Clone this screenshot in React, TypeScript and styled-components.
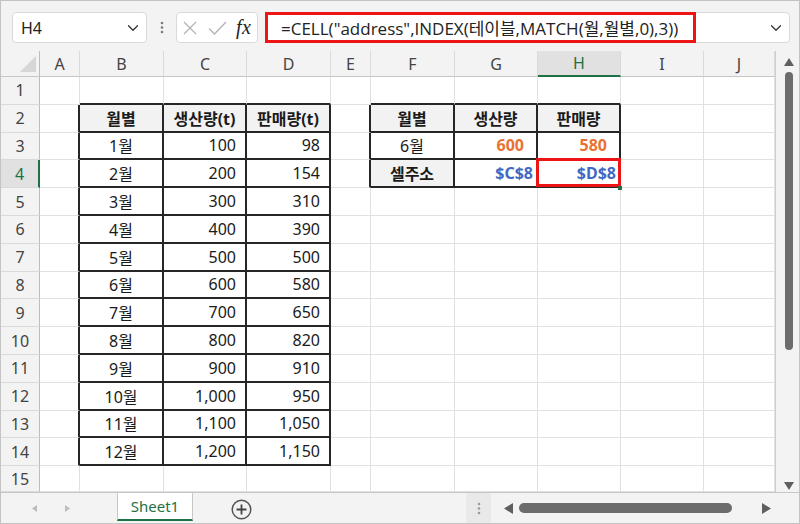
import React from 'react';
import styled, { createGlobalStyle } from 'styled-components';
import { ChevronDown } from 'lucide-react';

const GlobalStyle = createGlobalStyle`
  html, body {
    margin: 0;
    padding: 0;
    background: #fff;
  }
  body {
    font-family: "Noto Sans", "Noto Sans CJK KR", sans-serif;
  }
`;

const GREEN = '#1e7145';

const Window = styled.div`
  width: 800px;
  height: 524px;
  box-sizing: border-box;
  border: 1px solid #c4c4c4;
  background: #f3f3f3;
  display: flex;
  flex-direction: column;
  overflow: hidden;
`;

// ---- formula bar ----
const Toolbar = styled.div`
  flex: 0 0 50px;
  box-sizing: border-box;
  display: flex;
  align-items: flex-start;
  padding: 11px 9px 0 11px;
`;

const NameBox = styled.div`
  width: 135px;
  height: 31px;
  box-sizing: border-box;
  background: #fff;
  border: 1px solid #dadada;
  border-radius: 4px;
  display: flex;
  align-items: center;
  justify-content: space-between;
  padding: 0 4px 0 8px;
  font: 16px "Noto Sans", sans-serif;
  color: #222;
`;

const Kebab = styled.div`
  width: 29px;
  height: 31px;
  display: flex;
  align-items: center;
  justify-content: center;
`;

const IconBox = styled.div`
  width: 82px;
  height: 31px;
  box-sizing: border-box;
  background: #fff;
  border: 1px solid #dadada;
  border-radius: 4px;
  display: flex;
  align-items: center;
  padding-left: 6px;
  gap: 11px;
`;

const Fx = styled.span`
  font: italic 20px "Liberation Serif", serif;
  color: #222;
  margin-left: -2px;
  letter-spacing: 0.5px;
`;

const FormulaBox = styled.div`
  flex: 1;
  margin-left: 7px;
  height: 31px;
  box-sizing: border-box;
  background: #fff;
  border: 1px solid #dadada;
  border-radius: 4px;
  display: flex;
  align-items: center;
  justify-content: space-between;
  padding-right: 4px;
`;

const Highlight = styled.div`
  width: 431px;
  align-self: stretch;
  box-sizing: border-box;
  margin: -1px 0 -1px -1px;
  border: 3px solid #ec1414;
  display: flex;
  align-items: center;
  padding-left: 13px;
  font: 17px "Open Sans", "Noto Sans CJK KR", sans-serif;
  color: #222;
  white-space: nowrap;
`;

// ---- sheet ----
const Main = styled.div`
  flex: 1;
  display: flex;
  min-height: 0;
`;

const Sheet = styled.div`
  flex: 1;
  display: grid;
  grid-template-columns: 39px 40px 84px 83px 84px 40px 84px 83px 83px 83px 1fr;
  grid-template-rows: 26px repeat(14, 27.8px) 1fr;
  background: #fff;
  overflow: hidden;
`;

const Corner = styled.div`
  background: #f3f3f3;
  border-right: 1px solid #bdbdbd;
  border-bottom: 1px solid #c6c6c6;
  display: flex;
  align-items: flex-end;
  justify-content: flex-end;
  padding: 0 3px 4px 0;
`;

const ColHead = styled.div<{ $active?: boolean }>`
  box-sizing: border-box;
  display: flex;
  align-items: center;
  justify-content: center;
  background: ${p => (p.$active ? '#e1e1e1' : '#f3f3f3')};
  color: ${p => (p.$active ? GREEN : '#444')};
  border-right: 1px solid #dadada;
  border-bottom: ${p => (p.$active ? `2px solid ${GREEN}` : '1px solid #c6c6c6')};
  font: 16px "Noto Sans", sans-serif;
`;

const RowHead = styled.div<{ $active?: boolean }>`
  box-sizing: border-box;
  display: flex;
  align-items: center;
  justify-content: center;
  background: ${p => (p.$active ? '#e1e1e1' : '#f3f3f3')};
  color: ${p => (p.$active ? GREEN : '#444')};
  border-right: ${p => (p.$active ? `2px solid ${GREEN}` : '1px solid #bdbdbd')};
  border-bottom: 1px solid #dadada;
  font: 16px "Noto Sans", sans-serif;
`;

type Align = 'left' | 'center' | 'right';
type Tone = 'ink' | 'orange' | 'blue';

const tones: Record<Tone, string> = {
  ink: '#1a1a1a',
  orange: '#ea7130',
  blue: '#4068c4',
};

const Cell = styled.div<{
  $right: boolean;
  $bottom: boolean;
  $align: Align;
  $bold?: boolean;
  $tone: Tone;
  $fill?: boolean;
  $pad: number;
}>`
  position: relative;
  box-sizing: border-box;
  display: flex;
  align-items: center;
  justify-content: ${p => (p.$align === 'center' ? 'center' : p.$align === 'right' ? 'flex-end' : 'flex-start')};
  padding: 0 ${p => (p.$align === 'right' ? p.$pad : 0)}px 0 ${p => (p.$align === 'left' ? 4 : 0)}px;
  border-right: ${p => (p.$right ? '2px solid #262626' : '1px solid #e1e1e1')};
  border-bottom: ${p => (p.$bottom ? '2px solid #262626' : '1px solid #e1e1e1')};
  background: ${p => (p.$fill ? '#f2f2f2' : '#fff')};
  font: ${p => (p.$bold ? 700 : 400)} 16px "Noto Sans", "Noto Sans CJK KR", sans-serif;
  color: ${p => tones[p.$tone]};
  white-space: nowrap;
`;

const Focus = styled.div`
  position: absolute;
  left: -2px;
  right: -2px;
  top: -2px;
  bottom: -1px;
  border: 3px solid #ec1414;
  z-index: 2;
  pointer-events: none;
`;

const FillHandle = styled.div`
  position: absolute;
  right: -3px;
  bottom: -4px;
  width: 4px;
  height: 4px;
  background: ${GREEN};
  z-index: 3;
`;

// ---- vertical scrollbar ----
const VScroll = styled.div`
  flex: 0 0 24px;
  box-sizing: border-box;
  border-left: 1px solid #cfcfcf;
  background: #f3f3f3;
  display: flex;
  flex-direction: column;
  align-items: center;
  padding: 7px 0 2px 2px;
`;

const VThumb = styled.div`
  width: 8px;
  height: 278px;
  margin-top: 6px;
  border-radius: 4px;
  background: #6c6c6c;
`;

const Spacer = styled.div`
  flex: 1;
`;

// ---- sheet tabs ----
const TabBar = styled.div`
  flex: 0 0 31px;
  box-sizing: border-box;
  display: flex;
  align-items: stretch;
  border-top: 1px solid #c6c6c6;
  background: #f3f3f3;
`;

const TabNav = styled.div`
  width: 116px;
  display: flex;
  align-items: center;
  padding-left: 31px;
  gap: 28px;
  box-sizing: border-box;
`;

const Tab = styled.div`
  width: 76px;
  box-sizing: border-box;
  background: #fff;
  border-left: 1px solid #c6c6c6;
  border-right: 1px solid #c6c6c6;
  border-bottom: 2px solid ${GREEN};
  margin-bottom: 2px;
  display: flex;
  align-items: center;
  justify-content: center;
  font: 15px "Noto Sans", sans-serif;
  color: ${GREEN};
`;

const AddArea = styled.div`
  flex: 1;
  display: flex;
  align-items: center;
  padding: 3px 0 0 38px;
`;

const SplitGrip = styled.div`
  width: 25px;
  background: #e9e9e9;
  display: flex;
  align-items: center;
  justify-content: center;
`;

const HScroll = styled.div`
  width: 285px;
  display: flex;
  align-items: center;
  padding: 0 5px 0 13px;
  box-sizing: border-box;
  gap: 6px;
`;

const HThumb = styled.div`
  width: 213px;
  height: 10px;
  border-radius: 5px;
  background: #6c6c6c;
`;

const ScrollCorner = styled.div`
  width: 23px;
`;

// ---- data ----
const cols = ['A', 'B', 'C', 'D', 'E', 'F', 'G', 'H', 'I', 'J'];
const rows = Array.from({ length: 15 }, (_, i) => i + 1);

type CellData = { text: string; align?: Align; bold?: boolean; tone?: Tone; fill?: boolean; pad?: number };

const fmt = (n: number) => n.toLocaleString('en-US');
const sales = [98, 154, 310, 390, 500, 580, 650, 820, 910, 950, 1050, 1150];

const data: Record<string, CellData> = {
  B2: { text: '월별', align: 'center', bold: true, fill: true },
  C2: { text: '생산량(t)', align: 'center', bold: true, fill: true },
  D2: { text: '판매량(t)', align: 'center', bold: true, fill: true },
  F2: { text: '월별', align: 'center', bold: true, fill: true },
  G2: { text: '생산량', align: 'center', bold: true, fill: true },
  H2: { text: '판매량', align: 'center', bold: true, fill: true },
  F3: { text: '6월', align: 'center' },
  G3: { text: '600', align: 'right', bold: true, tone: 'orange', pad: 12 },
  H3: { text: '580', align: 'right', bold: true, tone: 'orange', pad: 12 },
  F4: { text: '셀주소', align: 'center', bold: true, fill: true },
  G4: { text: '$C$8', align: 'right', bold: true, tone: 'blue', pad: 3 },
  H4: { text: '$D$8', align: 'right', bold: true, tone: 'blue', pad: 3 },
};
sales.forEach((s, i) => {
  const r = i + 3;
  data[`B${r}`] = { text: `${i + 1}월`, align: 'center' };
  data[`C${r}`] = { text: fmt((i + 1) * 100), align: 'right' };
  data[`D${r}`] = { text: fmt(s), align: 'right' };
});

const tables = [
  { c0: 1, c1: 3, r0: 2, r1: 14 },
  { c0: 5, c1: 7, r0: 2, r1: 4 },
];
const inTable = (r: number, c: number) =>
  tables.some(t => c >= t.c0 && c <= t.c1 && r >= t.r0 && r <= t.r1);

const SelectAll = () => (
  <svg width="16" height="16" viewBox="0 0 16 16">
    <polygon points="16,0 16,16 0,16" fill="#d6d6d6" />
  </svg>
);

type Dir = 'up' | 'down' | 'left' | 'right';

const Tri = ({ dir, w, h, color }: { dir: Dir; w: number; h: number; color: string }) => {
  const pts = {
    up: `0,${h} ${w / 2},0 ${w},${h}`,
    down: `0,0 ${w},0 ${w / 2},${h}`,
    left: `${w},0 0,${h / 2} ${w},${h}`,
    right: `0,0 ${w},${h / 2} 0,${h}`,
  }[dir];
  return (
    <svg width={w} height={h} viewBox={`0 0 ${w} ${h}`}>
      <polygon points={pts} fill={color} />
    </svg>
  );
};

const Dots = ({ color }: { color: string }) => (
  <svg width="4" height="13" viewBox="0 0 4 13">
    <circle cx="2" cy="2" r="1.3" fill={color} />
    <circle cx="2" cy="6.5" r="1.3" fill={color} />
    <circle cx="2" cy="11" r="1.3" fill={color} />
  </svg>
);

export default function App() {
  return (
    <>
      <GlobalStyle />
      <Window>
        <Toolbar>
          <NameBox>
            H4
            <ChevronDown size={18} strokeWidth={1.7} color="#333" />
          </NameBox>
          <Kebab>
            <Dots color="#7a7a7a" />
          </Kebab>
          <IconBox>
            <svg width="14" height="14" viewBox="0 0 14 14">
              <path d="M1 1 13 13M13 1 1 13" stroke="#b3b3b3" strokeWidth="1.3" fill="none" />
            </svg>
            <svg width="19" height="14" viewBox="0 0 19 14">
              <path d="M1 7.5 6.5 13 18 1" stroke="#b3b3b3" strokeWidth="1.3" fill="none" />
            </svg>
            <Fx>fx</Fx>
          </IconBox>
          <FormulaBox>
            <Highlight>=CELL("address",INDEX(테이블,MATCH(월,월별,0),3))</Highlight>
            <ChevronDown size={18} strokeWidth={1.7} color="#333" />
          </FormulaBox>
        </Toolbar>

        <Main>
          <Sheet>
            <Corner>
              <SelectAll />
            </Corner>
            {cols.map(c => (
              <ColHead key={c} $active={c === 'H'}>
                {c}
              </ColHead>
            ))}
            {rows.map(r => (
              <React.Fragment key={r}>
                <RowHead $active={r === 4}>{r}</RowHead>
                {cols.map((c, ci) => {
                  const d = data[`${c}${r}`];
                  const selected = c === 'H' && r === 4;
                  return (
                    <Cell
                      key={c}
                      $right={inTable(r, ci) || inTable(r, ci + 1)}
                      $bottom={inTable(r, ci) || inTable(r + 1, ci)}
                      $align={d?.align ?? 'left'}
                      $bold={d?.bold}
                      $tone={d?.tone ?? 'ink'}
                      $fill={d?.fill}
                      $pad={d?.pad ?? 9}
                    >
                      {d?.text}
                      {selected && (
                        <>
                          <Focus />
                          <FillHandle />
                        </>
                      )}
                    </Cell>
                  );
                })}
              </React.Fragment>
            ))}
          </Sheet>
          <VScroll>
            <Tri dir="up" w={10} h={8} color="#5f5f5f" />
            <VThumb />
            <Spacer />
            <Tri dir="down" w={10} h={8} color="#5f5f5f" />
          </VScroll>
        </Main>

        <TabBar>
          <TabNav>
            <Tri dir="left" w={5} h={7} color="#bdbdbd" />
            <Tri dir="right" w={5} h={7} color="#bdbdbd" />
          </TabNav>
          <Tab>Sheet1</Tab>
          <AddArea>
            <svg width="21" height="21" viewBox="0 0 21 21">
              <circle cx="10.5" cy="10.5" r="9.3" stroke="#555" strokeWidth="1.5" fill="none" />
              <path d="M10.5 5.5v10M5.5 10.5h10" stroke="#444" strokeWidth="1.8" />
            </svg>
          </AddArea>
          <SplitGrip>
            <Dots color="#9a9a9a" />
          </SplitGrip>
          <HScroll>
            <Tri dir="left" w={9} h={11} color="#5f5f5f" />
            <HThumb />
            <Spacer />
            <Tri dir="right" w={9} h={11} color="#5f5f5f" />
          </HScroll>
          <ScrollCorner />
        </TabBar>
      </Window>
    </>
  );
}
